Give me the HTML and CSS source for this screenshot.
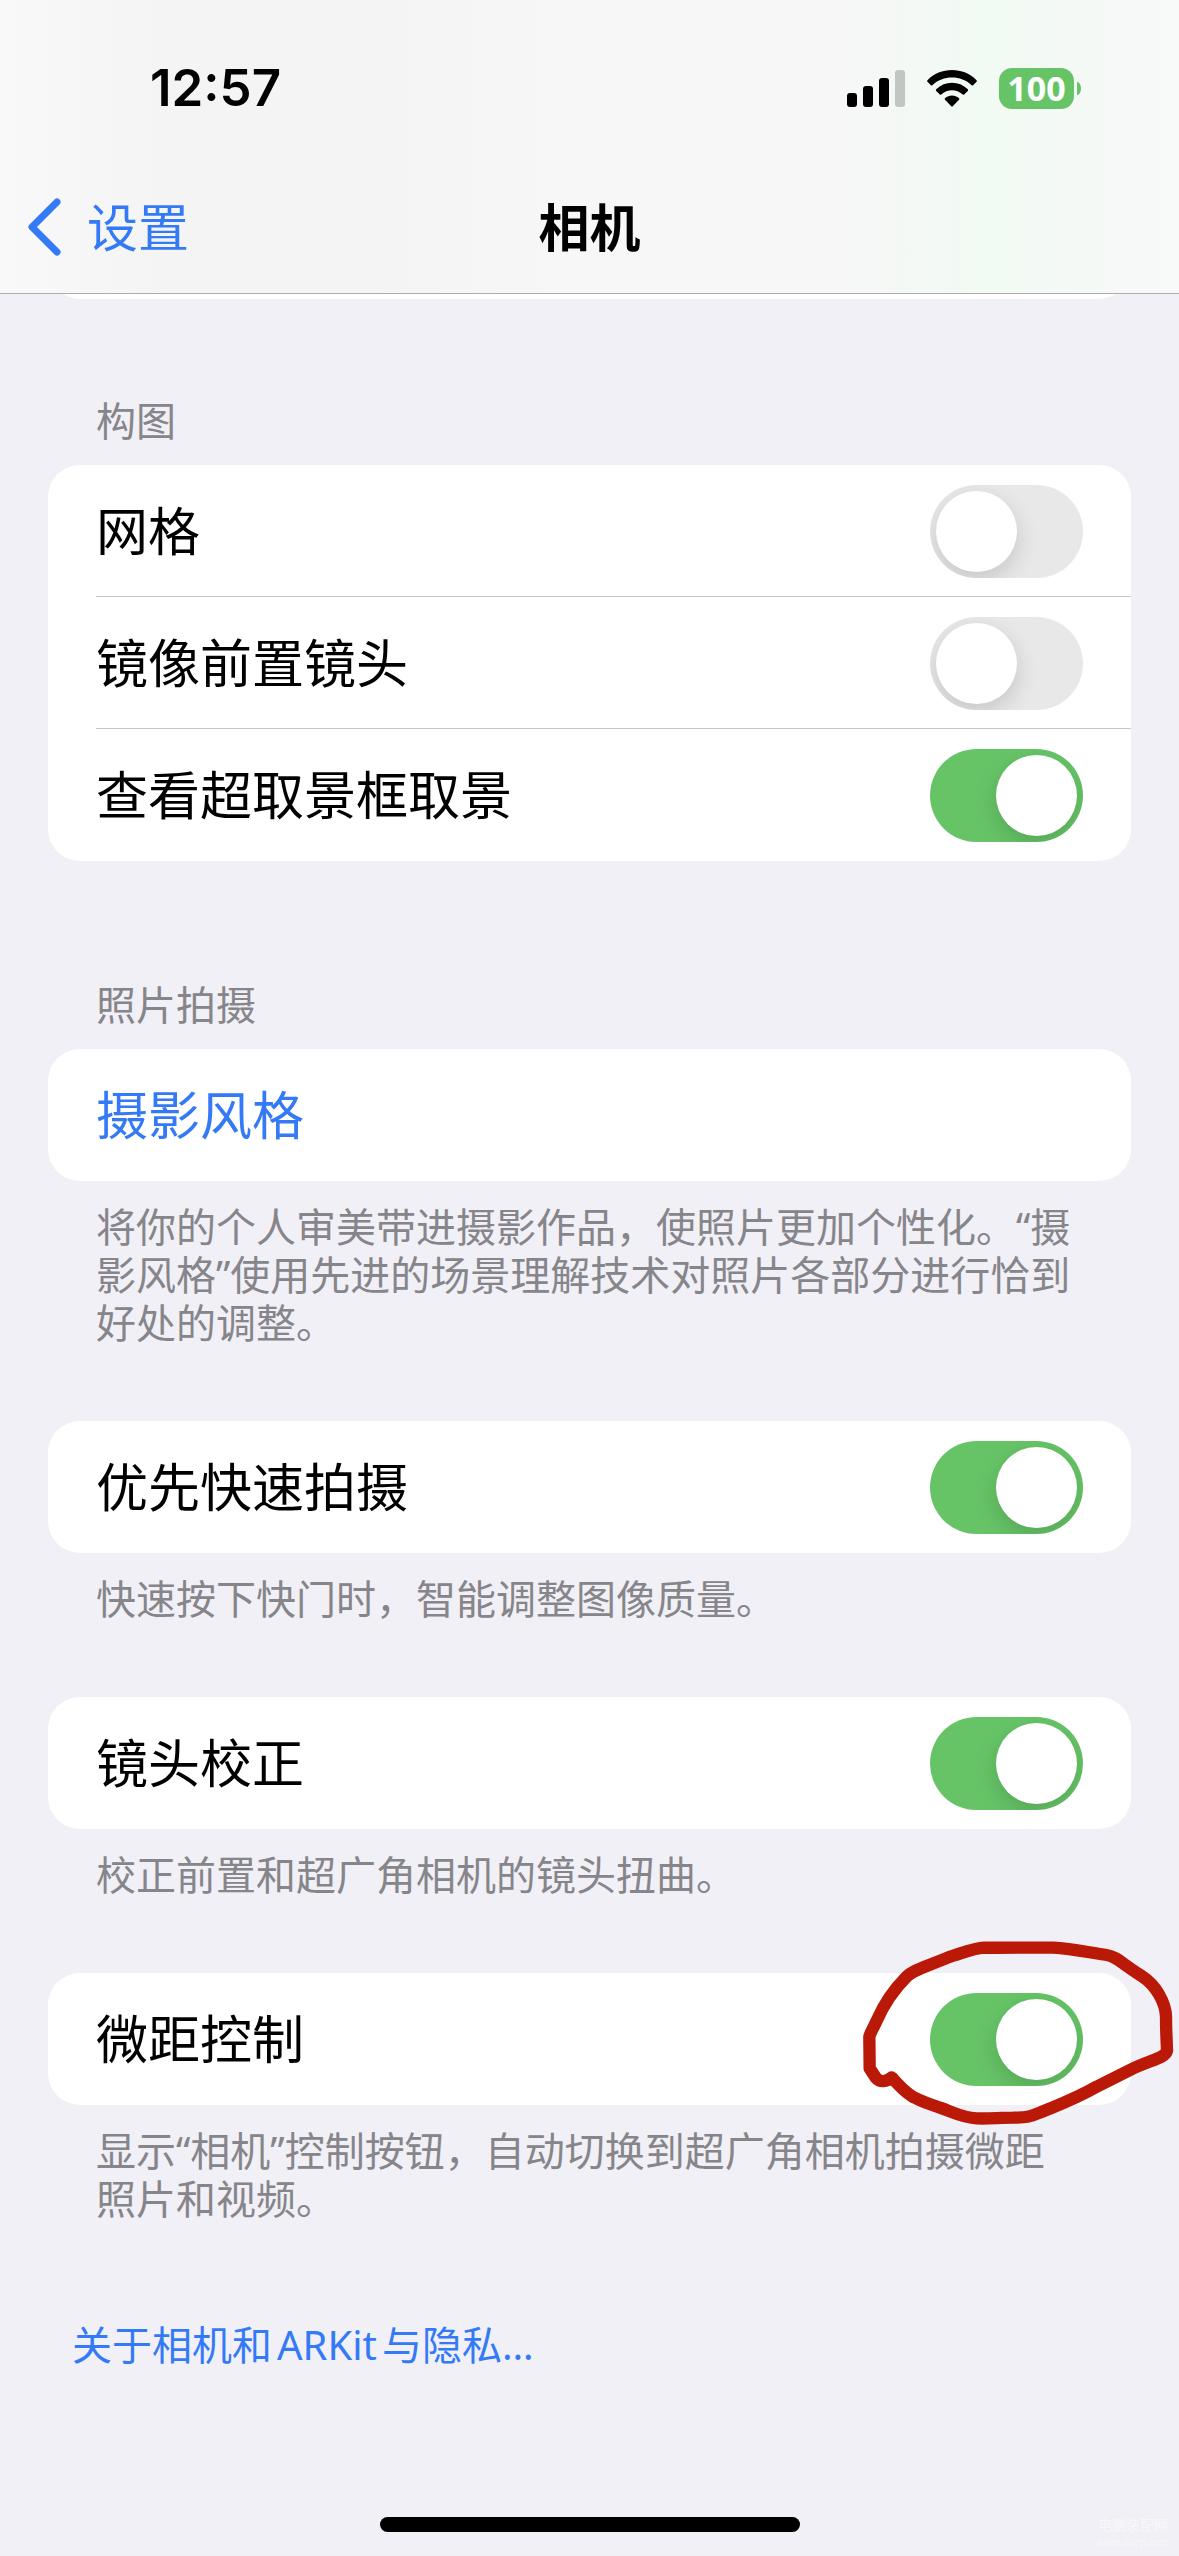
FILE: index.html
```html
<!DOCTYPE html>
<html lang="zh-CN">

<head>
    <meta charset="UTF-8">
    <meta name="viewport" content="width=device-width, initial-scale=1.0">
    <title>相机</title>
    <link rel="stylesheet" href="styles.css">
</head>

<body>
    <header class="top-bar">
        <div class="status-bar">
            <div class="time">12:57</div>
            <div class="status-icons">
                <svg class="signal" viewBox="0 0 58 37">
                    <rect x="0" y="23" width="10" height="14" rx="3"/>
                    <rect x="16" y="16" width="10" height="21" rx="3"/>
                    <rect x="32" y="8" width="10" height="29" rx="3"/>
                    <rect x="48" y="0" width="10" height="37" rx="3" fill="#c2c6c2"/>
                </svg>
                <svg class="wifi" viewBox="0 0 50 37">
                    <path d="M.5 10.2C13-3.4 37-3.4 49.5 10.2q.8.8 0 1.6l-3.4 3.4q-.7.6-1.4 0C34 4.900 16 4.900 5.300 15.200q-.7.6-1.400 0L.5 11.800q-.8-.8 0-1.600z"/>
                    <path d="M9.200 19.300C18 10.700 32 10.700 40.800 19.300q.8.800 0 1.600l-3.600 3.500q-.7.600-1.400 0C29.500 18.700 20.500 18.700 14.200 24.400q-.7.600-1.400 0l-3.600-3.500q-.8-.8 0-1.600z"/>
                    <path d="M18 28.200c4-3.600 10-3.600 14 0q.8.800 0 1.600l-6.300 6.500q-.7.700-1.400 0L18 29.800q-.8-.8 0-1.600z"/>
                </svg>
                <div class="battery"><span class="battery-level">100</span></div>
            </div>
        </div>
        <nav class="nav-bar">
            <a class="back" href="#">
                <svg class="chevron" viewBox="0 0 33 58">
                    <path d="M29 4L4 29l25 25"/>
                </svg>
                设置
            </a>
            <h1 class="title">相机</h1>
        </nav>
    </header>

    <main class="settings">
        <section class="group group-scrolled">
            <div class="card"><div class="row"></div></div>
        </section>

        <section class="group">
            <h2 class="group-title">构图</h2>
            <div class="card">
                <label class="row">网格 <input type="checkbox" class="switch"></label>
                <label class="row">镜像前置镜头 <input type="checkbox" class="switch"></label>
                <label class="row">查看超取景框取景 <input type="checkbox" class="switch" checked></label>
            </div>
        </section>

        <section class="group">
            <h2 class="group-title">照片拍摄</h2>
            <div class="card">
                <a class="row" href="#">摄影风格</a>
            </div>
            <p class="note">将你的个人审美带进摄影作品，使照片更加个性化。“摄影风格”使用先进的场景理解技术对照片各部分进行恰到好处的调整。</p>
        </section>

        <section class="group">
            <div class="card">
                <label class="row">优先快速拍摄 <input type="checkbox" class="switch" checked></label>
            </div>
            <p class="note">快速按下快门时，智能调整图像质量。</p>
        </section>

        <section class="group">
            <div class="card">
                <label class="row">镜头校正 <input type="checkbox" class="switch" checked></label>
            </div>
            <p class="note">校正前置和超广角相机的镜头扭曲。</p>
        </section>

        <section class="group">
            <div class="card">
                <label class="row">微距控制 <input type="checkbox" class="switch" checked></label>
                <svg class="marker" viewBox="0 0 1017 690">
                    <path d="M155 472C140 486 120 488 108 474L89 445L88 350C94 330 104 318 110 302C132 252 165 205 200 170C222 148 250 144 330 110C360 102 400 84 432 83C500 84 570 82 640 83C690 86 740 96 800 105C830 110 845 130 905 168C950 197 977 250 978 290C978 330 980 360 981 392C976 415 930 420 870 450L770 500C710 535 660 553 600 578C560 594 555 592 520 593C480 593 440 597 410 595C370 594 340 577 300 563C220 535 205 530 155 472"/>
                </svg>
            </div>
            <p class="note">显示“相机”控制按钮，自动切换到超广角相机拍摄微距照片和视频。</p>
        </section>

        <a class="privacy" href="#">关于相机和ARKit与隐私…</a>
    </main>

    <div class="home-indicator"></div>
    <div class="watermark">电脑装配网<br><span class="watermark-url">www.dnzp.com</span></div>
</body>

</html>
```
FILE: styles.css
```css
* {
    margin: 0;
    padding: 0;
    box-sizing: border-box;
}

body {
    position: relative;
    display: flex;
    flex-direction: column;
    min-height: 100vh;
    background-color: #f1f0f6;
    color: #000;
    font-family: "Noto Sans", "Noto Sans CJK SC", sans-serif;
    font-size: 52px;
    line-height: 60px;
    text-autospace: normal;
}

a {
    color: #347af6;
    text-decoration: none;
}

/* Header */
.top-bar {
    position: relative;
    z-index: 1;
    border-bottom: 1px solid #adadaf;
    background: linear-gradient(to right, #f9f9f9, #f4f4f4 14%, #f4f4f4 32%, #f7f7f7 48%, #f7f7f7 70%, #f1faf3 84%, #f6f9f7 95%, #f8f9f9);
}

.status-bar {
    display: flex;
    justify-content: space-between;
    align-items: center;
    height: 161px;
    padding: 15px 98px 0 150px;
}

.time {
    font-family: Inter, sans-serif;
    font-size: 51px;
    font-weight: 600;
}

.status-icons {
    display: flex;
    align-items: center;
    gap: 22px;
}

.signal {
    width: 58px;
    height: 37px;
}

.wifi {
    width: 50px;
    height: 37px;
}

.battery {
    position: relative;
    width: 82px;
}

.battery-level {
    display: block;
    width: 75px;
    border-radius: 13px;
    background-color: #66c466;
    color: #fff;
    font-size: 34px;
    font-weight: 700;
    line-height: 41px;
    text-align: center;
}

.battery::after {
    content: "";
    position: absolute;
    top: 14px;
    right: 0;
    width: 4px;
    height: 13px;
    border-radius: 0 4px 4px 0 / 0 7px 7px 0;
    background-color: #66c466;
}

.nav-bar {
    display: grid;
    grid-template-columns: 1fr auto 1fr;
    align-items: center;
    height: 132px;
    padding: 0 28px;
}

.back {
    display: flex;
    align-items: center;
    gap: 26px;
    font-size: 51px;
}

.chevron {
    width: 33px;
    height: 58px;
    fill: none;
    stroke: #347af6;
    stroke-width: 7;
    stroke-linecap: round;
    stroke-linejoin: round;
}

.title {
    font-size: 51px;
    font-weight: 700;
}

/* Groups */
.settings {
    padding: 0 48px;
}

.group {
    margin-bottom: 74px;
}

/* last card of the list part that is scrolled under the header */
.group-scrolled {
    margin-top: -127px;
    margin-bottom: 52px;
}

.group-title {
    padding: 46px 48px 20px;
    color: #86858a;
    font-size: 40px;
    font-weight: 400;
    line-height: 48px;
}

.card {
    position: relative;
    padding-left: 48px;
    border-radius: 32px;
    background-color: #fff;
}

.row {
    display: flex;
    justify-content: space-between;
    align-items: center;
    height: 132px;
    padding-right: 48px;
}

label.row:not(:last-of-type) {
    box-shadow: inset 0 -1px #c6c6c8;
}

.note {
    padding: 22px 48px 0;
    color: #86858a;
    font-size: 40px;
    line-height: 48px;
}

.switch {
    appearance: none;
    width: 153px;
    height: 93px;
    padding: 6px;
    border-radius: 47px;
    overflow: hidden;
    background-color: #e8e8e8;
}

.switch::before {
    content: "";
    display: block;
    width: 81px;
    height: 81px;
    border-radius: 50%;
    background-color: #fff;
    box-shadow: 0 8px 22px rgba(0, 0, 0, 0.15);
}

.switch:checked {
    background-color: #66c466;
}

.switch:checked::before {
    margin-left: auto;
}

/* hand drawn ring round the last switch */
.marker {
    position: absolute;
    top: -53px;
    right: -48px;
    width: 339px;
    height: 230px;
    fill: none;
    stroke: #bb1907;
    stroke-width: 37;
    stroke-linecap: round;
    stroke-linejoin: round;
    pointer-events: none;
}

.privacy {
    display: block;
    padding: 24px 24px 0;
    font-size: 40px;
    line-height: 48px;
}

.home-indicator {
    width: 420px;
    height: 15px;
    margin: auto auto 24px;
    border-radius: 8px;
    background-color: #000;
}

.watermark {
    position: absolute;
    right: 10px;
    bottom: 6px;
    color: #f8f8fa;
    font-size: 14px;
    line-height: 16px;
    text-align: center;
}

.watermark-url {
    font-size: 10px;
}
```
